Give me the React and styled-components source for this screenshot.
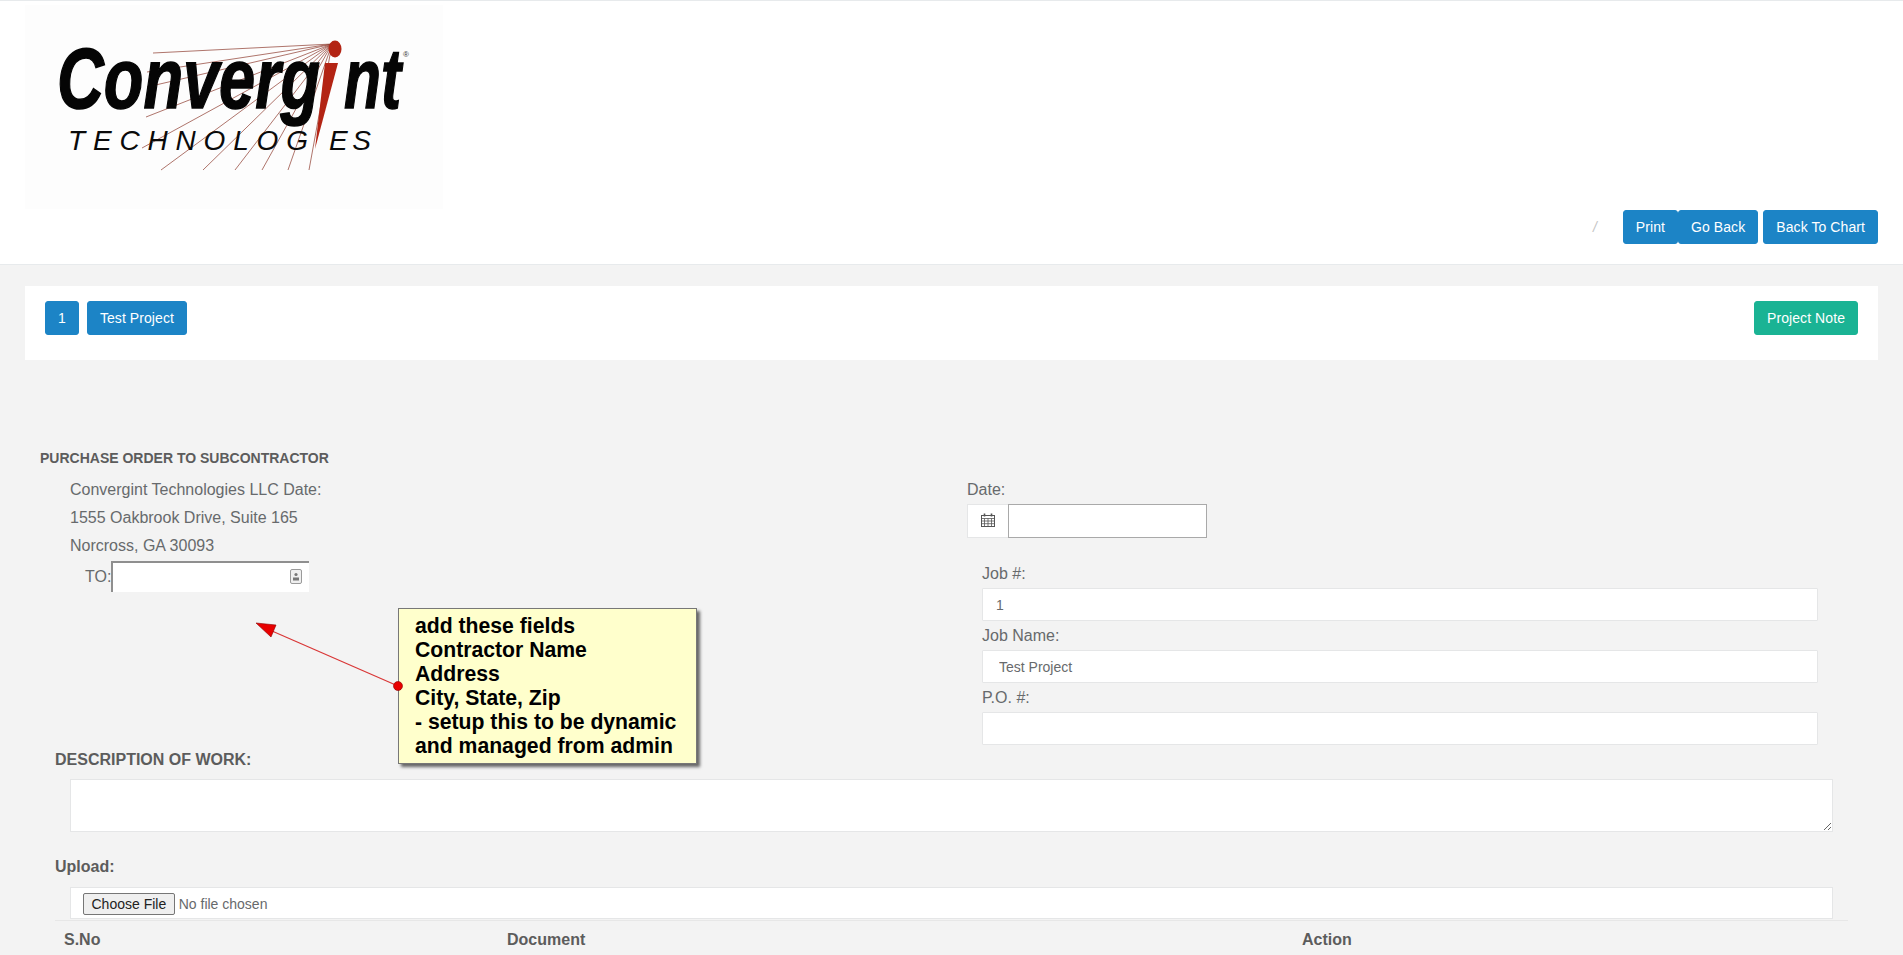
import React from 'react';
import styled, { createGlobalStyle } from 'styled-components';

const GlobalStyle = createGlobalStyle`
  html, body {
    margin: 0;
    padding: 0;
    height: 955px;
    overflow: hidden;
    background: #f3f3f3;
    font-family: "Liberation Sans", Arial, sans-serif;
    font-size: 14px;
    color: #676a6c;
  }
  * { box-sizing: border-box; }
`;

const Page = styled.div`
  position: relative;
  width: 1903px;
  height: 955px;
  overflow: hidden;
`;

const Header = styled.header`
  display: flex;
  justify-content: space-between;
  align-items: flex-end;
  height: 265px;
  padding: 0 25px 20px;
  background: #fff;
  border-top: 1px solid #e7eaec;
  border-bottom: 1px solid #e7eaec;
`;

const LogoWrap = styled.svg`
  display: block;
  width: 418px;
  height: 204px;
  margin-bottom: 35px;
  background: #fdfdfd;
`;

const Actions = styled.div`
  display: flex;
  align-items: center;
`;

const Slash = styled.span`
  margin-right: 26px;
  color: #c4c4c4;
  font-style: italic;
`;

const Button = styled.button`
  height: 34px;
  padding: 0 12px;
  margin-left: ${(p) => p.$gap || 0}px;
  border: 1px solid ${(p) => (p.$green ? '#1ab394' : '#1c84c6')};
  border-radius: 3px;
  background: ${(p) => (p.$green ? '#1ab394' : '#1c84c6')};
  color: #fff;
  font: 14px "Liberation Sans", Arial, sans-serif;
  letter-spacing: 0.08px;
`;

const ProjectBar = styled.section`
  display: flex;
  justify-content: space-between;
  align-items: flex-start;
  width: 1853px;
  height: 74px;
  margin: 21px 0 0 25px;
  padding: 15px 20px;
  background: #fff;
`;

const ButtonGroup = styled.div`
  display: flex;
`;

const Form = styled.main`
  padding: 88px 0 0 40px;
`;

const Title = styled.h3`
  margin: 0;
  font-size: 14px;
  line-height: 20px;
  font-weight: 700;
  color: #5c5c5c;
`;

const Columns = styled.div`
  display: flex;
`;

const LeftColumn = styled.div`
  width: 927px;
  padding: 8px 0 0 30px;
`;

const AddressLine = styled.div`
  font-size: 16px;
  line-height: 28px;
`;

const ToRow = styled.div`
  display: flex;
  align-items: center;
  height: 31px;
  margin: 1px 0 0 15px;
  font-size: 16px;
`;

const ToField = styled.div`
  position: relative;
  width: 198px;
  height: 31px;
  background: #fff;
  border-top: 2px solid #8f8f8f;
  border-left: 2px solid #8f8f8f;
`;

const ContactIcon = styled.svg`
  position: absolute;
  right: 7px;
  top: 6px;
  width: 12px;
  height: 15px;
`;

const RightColumn = styled.div`
  width: 851px;
  padding-top: 11px;
`;

const Label = styled.label`
  display: block;
  padding-top: 1px;
  margin-bottom: 4px;
  font-size: 16px;
  line-height: 20px;
`;

const DateGroup = styled.div`
  display: flex;
  height: 34px;
`;

const Addon = styled.span`
  display: flex;
  align-items: center;
  justify-content: center;
  width: 41px;
  padding-bottom: 3px;
  background: #fff;
  border: 1px solid #e5e6e7;
  border-right: 0;
`;

const DateInput = styled.input`
  width: 199px;
  height: 34px;
  background: #fff;
  border: 1px solid #a9a9a9;
  outline: none;
`;

const JobFields = styled.div`
  display: flex;
  flex-direction: column;
  gap: 4px;
  margin-top: 25px;
  padding-left: 15px;
`;

const TextInput = styled.input`
  display: block;
  width: 836px;
  height: 33px;
  padding: 0 ${(p) => p.$pad || 14}px;
  background: #fff;
  border: 1px solid #e5e6e7;
  border-radius: 1px;
  outline: none;
  color: #676a6c;
  font: 14px "Liberation Sans", Arial, sans-serif;
`;

const Block = styled.div`
  margin: ${(p) => p.$top}px 0 0 15px;
`;

const BlockLabel = styled.label`
  display: block;
  padding-top: 1px;
  margin-bottom: ${(p) => p.$gap}px;
  font-size: 16px;
  line-height: 20px;
  font-weight: 700;
  color: #5c5c5c;
`;

const Description = styled.textarea`
  display: block;
  width: 1763px;
  height: 53px;
  margin-left: 15px;
  background: #fff;
  border: 1px solid #e5e6e7;
  outline: none;
`;

const UploadBox = styled.div`
  display: flex;
  align-items: center;
  width: 1763px;
  height: 32px;
  margin-left: 15px;
  padding: 2px 0 0 12px;
  background: #fff;
  border: 1px solid #e5e6e7;
`;

const FileInput = styled.input`
  font: 14px "Liberation Sans", Arial, sans-serif;
  color: #676a6c;

  &::file-selector-button {
    height: 22px;
    margin-right: 4px;
    padding: 0 7.5px;
    background: #efefef;
    border: 1px solid #767676;
    border-radius: 2px;
    color: #222;
    font: 14px "Liberation Sans", Arial, sans-serif;
  }
`;

const DocTable = styled.table`
  width: 1793px;
  margin: 1px 0 0 15px;
  border-collapse: collapse;
  table-layout: fixed;
  border-top: 1px solid #e7e7e7;

  th {
    padding: 9px;
    text-align: left;
    font-size: 16px;
    line-height: 20px;
    color: #5c5c5c;
  }
`;

const Note = styled.aside`
  position: absolute;
  left: 398px;
  top: 608px;
  width: 299px;
  height: 156px;
  padding: 5px 0 0 16px;
  background: #ffffcc;
  border: 1px solid #777;
  box-shadow: 3px 3px 3px #666;
  color: #000;
  font-size: 21.2px;
  line-height: 24px;
  font-weight: 700;
`;

const ArrowLayer = styled.svg`
  position: absolute;
  left: 250px;
  top: 615px;
  width: 156px;
  height: 80px;
`;

const rays = [
  [153, 53], [147, 72], [147, 87], [146, 117], [142, 148],
  [161, 170], [203, 170], [235, 170], [262, 170], [288, 170], [309, 170],
];

const Logo = () => (
  <LogoWrap viewBox="25 5 418 204">
    {rays.map(([x, y]) => (
      <line key={`${x}-${y}`} x1="332" y1="44" x2={x} y2={y} stroke="#8c3a2c" strokeWidth="0.7" />
    ))}
    <text x="57" y="108" fontFamily="Liberation Sans" fontWeight="700" fontStyle="italic" fontSize="86" textLength="263" lengthAdjust="spacingAndGlyphs" fill="#050505" stroke="#050505" strokeWidth="1.5">Converg</text>
    <text x="344" y="108" fontFamily="Liberation Sans" fontWeight="700" fontStyle="italic" fontSize="86" textLength="57" lengthAdjust="spacingAndGlyphs" fill="#050505" stroke="#050505" strokeWidth="1.5">nt</text>
    <ellipse cx="335" cy="49" rx="6.5" ry="8.5" fill="#b32414" />
    <polygon points="325,63 338,63 315,149" fill="#b32414" />
    <text x="403" y="57" fontFamily="Liberation Sans" fontSize="8" fill="#333">®</text>
    <text x="68" y="150" fontFamily="Liberation Sans" fontStyle="italic" fontSize="28" textLength="240" fill="#0a0a0a">TECHNOLOG</text>
    <text x="329" y="150" fontFamily="Liberation Sans" fontStyle="italic" fontSize="28" textLength="42" fill="#0a0a0a">ES</text>
  </LogoWrap>
);

const CalendarIcon = () => (
  <svg width="14" height="14" viewBox="0 0 14 14" fill="none" stroke="#555" strokeWidth="1">
    <rect x="0.5" y="2.5" width="13" height="11" />
    <path d="M0.5 5.5H13.5M0.5 8H13.5M0.5 10.7H13.5M3.5 5.5V13.5M7 5.5V13.5M10.5 5.5V13.5" strokeWidth="0.8" />
    <path d="M3.5 0.5V3.5M10.5 0.5V3.5" strokeWidth="1.6" />
  </svg>
);

const App = () => (
  <Page>
    <GlobalStyle />
    <Header>
      <Logo />
      <Actions>
        <Slash>/</Slash>
        <Button>Print</Button>
        <Button>Go Back</Button>
        <Button $gap={5}>Back To Chart</Button>
      </Actions>
    </Header>

    <ProjectBar>
      <ButtonGroup>
        <Button>1</Button>
        <Button $gap={8}>Test Project</Button>
      </ButtonGroup>
      <Button $green>Project Note</Button>
    </ProjectBar>

    <Form>
      <Title>PURCHASE ORDER TO SUBCONTRACTOR</Title>
      <Columns>
        <LeftColumn>
          <AddressLine>Convergint Technologies LLC Date:</AddressLine>
          <AddressLine>1555 Oakbrook Drive, Suite 165</AddressLine>
          <AddressLine>Norcross, GA 30093</AddressLine>
          <ToRow>
            TO:
            <ToField>
              <ContactIcon viewBox="0 0 12 15">
                <rect x="0.5" y="0.5" width="11" height="14" rx="1.5" fill="#efefef" stroke="#9a9a9a" />
                <circle cx="6" cy="5.5" r="1.6" fill="#777" />
                <rect x="3" y="8.5" width="6" height="3" fill="#777" />
              </ContactIcon>
            </ToField>
          </ToRow>
        </LeftColumn>
        <RightColumn>
          <Label>Date:</Label>
          <DateGroup>
            <Addon><CalendarIcon /></Addon>
            <DateInput />
          </DateGroup>
          <JobFields>
            <div>
              <Label>Job #:</Label>
              <TextInput defaultValue="1" $pad={13} />
            </div>
            <div>
              <Label>Job Name:</Label>
              <TextInput defaultValue="Test Project" $pad={16} />
            </div>
            <div>
              <Label>P.O. #:</Label>
              <TextInput />
            </div>
          </JobFields>
        </RightColumn>
      </Columns>

      <Block $top={4}>
        <BlockLabel $gap={9}>DESCRIPTION OF WORK:</BlockLabel>
        <Description />
      </Block>
      <Block $top={24}>
        <BlockLabel $gap={10}>Upload:</BlockLabel>
        <UploadBox><FileInput type="file" /></UploadBox>
      </Block>
      <DocTable>
        <colgroup>
          <col width="443" />
          <col width="795" />
          <col />
        </colgroup>
        <thead>
          <tr>
            <th>S.No</th>
            <th>Document</th>
            <th>Action</th>
          </tr>
        </thead>
      </DocTable>
    </Form>

    <Note>
      add these fields<br />
      Contractor Name<br />
      Address<br />
      City, State, Zip<br />
      - setup this to be dynamic<br />
      and managed from admin
    </Note>
    <ArrowLayer viewBox="250 615 156 80">
      <line x1="398" y1="686" x2="272" y2="631" stroke="#d93636" strokeWidth="1.2" />
      <polygon points="256,623 276,625 271,637" fill="#e80000" stroke="#8a0000" strokeWidth="0.6" />
      <circle cx="398" cy="686" r="4.5" fill="#e80000" stroke="#8a0000" strokeWidth="0.6" />
    </ArrowLayer>
  </Page>
);

export default App;
